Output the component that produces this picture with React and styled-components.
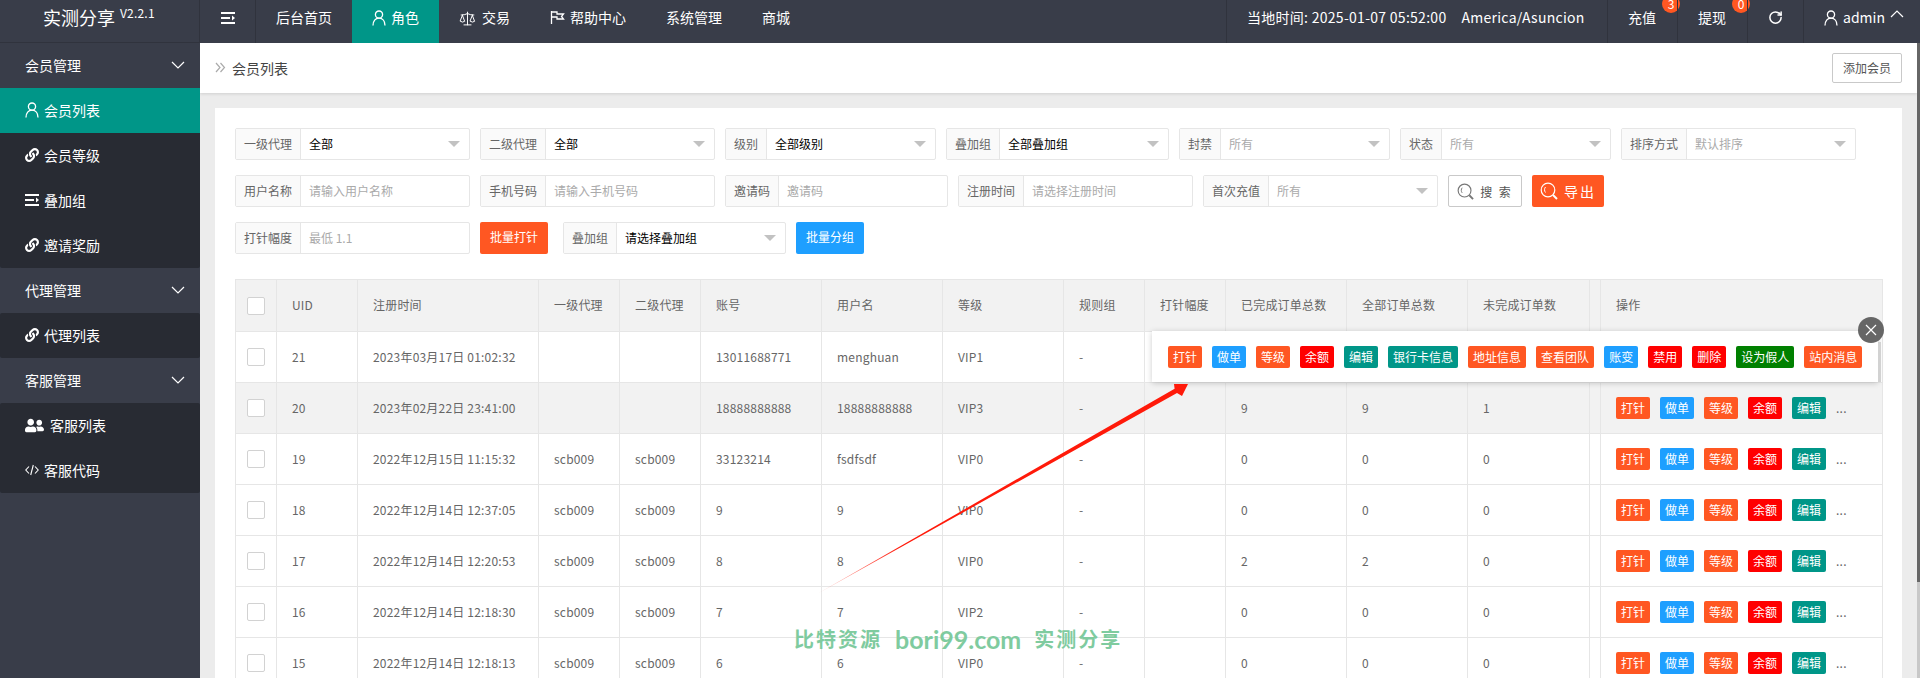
import React from "react";
import styled, { createGlobalStyle } from "styled-components";
import { Scale, RotateCw } from "lucide-react";
import { FaLink, FaUserFriends } from "react-icons/fa";

const GlobalStyle = createGlobalStyle`
  html, body {
    margin: 0;
    height: 100%;
    overflow: hidden;
    background: #ececec;
  }
  * { box-sizing: border-box; }
  body {
    font-family: "Noto Sans CJK SC", "Open Sans", sans-serif;
    font-size: 12px;
    color: #666;
  }
`;

const Page = styled.div`
  position: relative;
  width: 1920px;
  height: 678px;
  overflow: hidden;
  display: grid;
  grid-template-columns: 200px 1fr;
  grid-template-rows: 43px 1fr;
`;

/* top bar */
const Logo = styled.div`
  background: #393d49;
  border-bottom: 1px solid #30333d;
  border-right: 1px solid #30333d;
  color: #fff;
  font-size: 18px;
  line-height: 34px;
  padding-left: 43px;
  white-space: nowrap;
  sup {
    font-size: 12px;
    line-height: 12px;
    margin-left: 5px;
    letter-spacing: 0.2px;
    vertical-align: 7px;
  }
`;
const TopBar = styled.div`
  background: #393d49;
  color: #fff;
  display: flex;
  font-size: 14px;
  line-height: 34px;
`;
const Burger = styled.div`
  width: 56px;
  border-right: 1px solid #30333d;
  display: flex;
  align-items: center;
  justify-content: center;
  padding-bottom: 7px;
`;
const NavItem = styled.div`
  display: flex;
  gap: ${(p) => p.$gap || 5}px;
  align-items: flex-start;
  padding: 0 20px;
  white-space: nowrap;
  background: ${(p) => (p.$active ? "#009688" : "transparent")};
  svg { flex: none; margin-top: 10px; }
`;
const Spacer = styled.div`
  flex: 1;
`;
const RightCell = styled.div`
  position: relative;
  width: ${(p) => p.$w}px;
  border-left: 1px solid #30333d;
  display: flex;
  gap: ${(p) => p.$gap || 0}px;
  justify-content: ${(p) => (p.$center ? "center" : "flex-start")};
  padding-left: ${(p) => (p.$center ? 0 : 20)}px;
  white-space: nowrap;
  svg { flex: none; margin-top: 10px; }
`;
const TimeText = styled.span`
  letter-spacing: 0.28px;
`;
const Badge = styled.span`
  position: absolute;
  left: 54px;
  top: -5px;
  width: 18px;
  height: 18px;
  border-radius: 50%;
  background: #ff5722;
  font-size: 12px;
  line-height: 18px;
  text-align: center;
`;

/* side menu */
const Side = styled.div`
  background: #393d49;
  color: #fff;
  font-size: 14px;
`;
const SideHead = styled.div`
  height: 45px;
  padding: 0 15px 2px 25px;
  display: flex;
  align-items: center;
  justify-content: space-between;
`;
const SideGroup = styled.div`
  background: #282b33;
  border-radius: 2px;
`;
const SideItem = styled.div`
  height: 45px;
  padding: 0 0 1px 25px;
  display: flex;
  align-items: center;
  gap: ${(p) => p.$gap || 5}px;
  background: ${(p) => (p.$active ? "#009688" : "transparent")};
  svg { flex: none; }
`;

/* main area */
const Main = styled.div`
  background: #ececec;
  overflow: hidden;
  display: flex;
`;
const Content = styled.div`
  flex: 1;
  min-width: 0;
`;
const ScrollRail = styled.div`
  flex: none;
  width: 3px;
  background: #c8c8c8;
`;
const ScrollThumb = styled.div`
  height: 539px;
  background: #666;
`;
const Crumbs = styled.div`
  height: 50px;
  background: #fff;
  box-shadow: 0 1px 3px rgba(0, 0, 0, 0.12);
  padding: 0 15px;
  display: flex;
  align-items: center;
  justify-content: space-between;
`;
const CrumbText = styled.div`
  display: flex;
  align-items: center;
  gap: 6px;
  font-size: 14px;
  color: #444;
  padding-bottom: 1px;
`;
const AddButton = styled.div`
  width: 70px;
  height: 30px;
  border: 1px solid #c9c9c9;
  border-radius: 2px;
  color: #555;
  line-height: 28px;
  text-align: center;
`;
const Card = styled.div`
  margin: 15px 0 0 15px;
  width: 1687px;
  height: 683px;
  background: #fff;
  padding: 20px;
`;
const FormRow = styled.div`
  display: flex;
  gap: 10px;
  margin-bottom: 15px;
`;
const Field = styled.div`
  position: relative;
  width: ${(p) => p.$w || 235}px;
  height: 32px;
  border: 1px solid #e6e6e6;
  border-radius: 2px;
  display: flex;
  line-height: 30px;
  background: #fff;
`;
const FieldLabel = styled.div`
  padding: 0 8px;
  background: #fafafa;
  border-right: 1px solid #e6e6e6;
  color: #666;
  white-space: nowrap;
`;
const FieldValue = styled.div`
  padding-left: 8px;
  white-space: nowrap;
  color: ${(p) => (p.$strong ? "#000" : "#aaa")};
`;
const Caret = styled.i`
  position: absolute;
  right: 9px;
  top: 12px;
  border: 6px solid transparent;
  border-top-color: #c2c2c2;
  border-bottom: 0;
`;
const ActionButton = styled.div`
  width: 68px;
  height: 32px;
  margin-right: ${(p) => p.$mr || 0}px;
  border-radius: 2px;
  background: ${(p) => p.$bg};
  color: #fff;
  line-height: 30px;
  text-align: center;
  white-space: nowrap;
`;
const SearchButton = styled.div`
  width: ${(p) => p.$w}px;
  height: 32px;
  border-radius: 2px;
  background: ${(p) => p.$bg || "#fff"};
  border: ${(p) => (p.$bg ? "0" : "1px solid #c9c9c9")};
  color: ${(p) => (p.$bg ? "#fff" : "#555")};
  display: flex;
  align-items: center;
  justify-content: center;
  gap: 6px;
  letter-spacing: 2px;
  font-size: ${(p) => (p.$bg ? 14 : 12)}px;
`;

/* table */
const Table = styled.table`
  table-layout: fixed;
  width: 1647px;
  margin-top: 25px;
  border-collapse: collapse;
  color: #666;
`;
const HeadRow = styled.tr`
  height: 52px;
  background: #f2f2f2;
`;
const Row = styled.tr`
  height: 51px;
  background: ${(p) => (p.$hover ? "#f2f2f2" : "#fff")};
`;
const Cell = styled.td`
  border: 1px solid #e6e6e6;
  padding: 0 0 2px 15px;
  font-weight: 400;
  letter-spacing: 0.2px;
  text-align: left;
  white-space: nowrap;
  overflow: hidden;
`;
const FixedCell = styled(Cell)`
  position: relative;
  overflow: visible;
  background: inherit;
  box-shadow: ${(p) => (p.$left ? "3px 0 5px -2px" : "-3px 0 5px -2px")} rgba(0, 0, 0, 0.1);
  z-index: 1;
`;
const CheckCell = styled(Cell)`
  padding: 0 0 0 11px;
`;
const Check = styled.div`
  width: 18px;
  height: 18px;
  border: 1px solid #d2d2d2;
  border-radius: 2px;
  background: #fff;
`;
const Ops = styled.div`
  display: flex;
  align-items: center;
  gap: 10px;
  margin-top: 2px;
`;
const OpButton = styled.div`
  height: 22px;
  padding: 0 5px;
  border-radius: 2px;
  background: ${(p) => p.$bg};
  color: #fff;
  font-size: 12px;
  letter-spacing: 0;
  line-height: 22px;
  white-space: nowrap;
`;
const More = styled.span`
  color: #666;
  line-height: 22px;
`;

/* overlays */
const Popup = styled.div`
  position: absolute;
  left: 1152px;
  top: 331px;
  width: 726px;
  height: 51px;
  padding-left: 16px;
  background: #fff;
  box-shadow: 0 1px 6px rgba(0, 0, 0, 0.2);
  display: flex;
  align-items: center;
  gap: 10px;
  z-index: 3;
  &::after {
    content: "";
    position: absolute;
    right: -3px;
    top: 11px;
    bottom: 0;
    width: 3px;
    background: #d2d2d2;
  }
`;
const Close = styled.div`
  position: absolute;
  right: -6px;
  top: -14px;
  width: 26px;
  height: 26px;
  border-radius: 50%;
  background: #666;
  display: flex;
  align-items: center;
  justify-content: center;
  z-index: 4;
`;
const ArrowLayer = styled.svg`
  position: absolute;
  left: 0;
  top: 0;
  pointer-events: none;
  z-index: 5;
`;
const Watermark = styled.div`
  position: absolute;
  left: 794px;
  top: 624px;
  display: flex;
  gap: 13px;
  color: #7fcb9f;
  font-size: 20px;
  font-weight: 700;
  line-height: 30px;
  white-space: nowrap;
  z-index: 5;
`;
const MarkCjk = styled.span`
  letter-spacing: 2px;
`;
const MarkLatin = styled.span`
  font-family: "Lato", sans-serif;
  font-size: 25px;
`;

/* drawn icons */
const UserIcon = ({ size = 14 }) => (
  <svg width={size} height={size + 2} viewBox="0 0 14 16" fill="none" stroke="#fff" strokeWidth="1.3">
    <circle cx="7" cy="4.6" r="3.6" />
    <path d="M1 15.5c0-4.4 2.4-7.3 6-7.3s6 2.900 6 7.300" />
  </svg>
);
const MenuIcon = () => (
  <svg width="14" height="12" viewBox="0 0 14 12" fill="#fff">
    <rect x="0" y="0" width="14" height="2" />
    <rect x="0" y="5" width="9" height="2" />
    <path d="M11 3.500 14 6l-3 2.500z" />
    <rect x="0" y="10" width="14" height="2" />
  </svg>
);
const FlagIcon = () => (
  <svg width="15" height="15" viewBox="0 0 15 15" fill="none" stroke="#fff" strokeWidth="1.3">
    <path d="M1.500 1v13" />
    <path d="M1.500 2h5.500v2h6.500l-2 2.500 2 2.500H7V7H1.500" />
  </svg>
);
const CodeIcon = () => (
  <svg width="14" height="12" viewBox="0 0 14 12" fill="none" stroke="#fff" strokeWidth="1.1">
    <polyline points="4,2.500 0.800,6 4,9.500" />
    <polyline points="10,2.500 13.200,6 10,9.500" />
    <path d="M8.300 1 5.700 11" />
  </svg>
);
const Chevron = ({ up }) => (
  <svg width="14" height="8" viewBox="0 0 14 8" fill="none" stroke="#fff" strokeWidth="1.2">
    <polyline points={up ? "1,7 7,1 13,7" : "1,1 7,7 13,1"} />
  </svg>
);
const DoubleRight = () => (
  <svg width="11" height="11" viewBox="0 0 11 11" fill="none" stroke="#aaa" strokeWidth="1.200">
    <polyline points="1,1 5,5.500 1,10" />
    <polyline points="5.500,1 9.500,5.500 5.500,10" />
  </svg>
);
const SearchIcon = ({ color, size }) => (
  <svg width={size} height={size} viewBox="0 0 18 18" fill="none" stroke={color}>
    <circle cx="8" cy="8" r="6.800" strokeWidth="1.200" />
    <path d="M5.500 5c-1.300 1.500-1.300 4 0 5.500" strokeWidth="1" />
    <path d="M13 13l4 4" strokeWidth="2" />
  </svg>
);

const ORANGE = "#ff5722";
const BLUE = "#1e9fff";
const RED = "#ff0000";
const TEAL = "#009688";
const GREEN = "#008000";

const mainOps = [
  ["打针", ORANGE],
  ["做单", BLUE],
  ["等级", ORANGE],
  ["余额", RED],
  ["编辑", TEAL],
];
const popupOps = [
  ...mainOps,
  ["银行卡信息", TEAL],
  ["地址信息", ORANGE],
  ["查看团队", ORANGE],
  ["账变", BLUE],
  ["禁用", RED],
  ["删除", RED],
  ["设为假人", GREEN],
  ["站内消息", ORANGE],
];

const widths = [41, 81, 181, 81, 81, 121, 121, 121, 81, 81, 121, 121, 122, 11, 282];
const heads = ["一级代理", "二级代理", "账号", "用户名", "等级", "规则组", "打针幅度", "已完成订单总数", "全部订单总数", "未完成订单数"];
const rows = [
  ["21", "2023年03月17日 01:02:32", "", "", "13011688771", "menghuan", "VIP1", "-", "", "", "", ""],
  ["20", "2023年02月22日 23:41:00", "", "", "18888888888", "18888888888", "VIP3", "-", "", "9", "9", "1"],
  ["19", "2022年12月15日 11:15:32", "scb009", "scb009", "33123214", "fsdfsdf", "VIP0", "-", "", "0", "0", "0"],
  ["18", "2022年12月14日 12:37:05", "scb009", "scb009", "9", "9", "VIP0", "-", "", "0", "0", "0"],
  ["17", "2022年12月14日 12:20:53", "scb009", "scb009", "8", "8", "VIP0", "-", "", "2", "2", "0"],
  ["16", "2022年12月14日 12:18:30", "scb009", "scb009", "7", "7", "VIP2", "-", "", "0", "0", "0"],
  ["15", "2022年12月14日 12:18:13", "scb009", "scb009", "6", "6", "VIP0", "-", "", "0", "0", "0"],
];

function SelectField({ label, value, strong, w }) {
  return (
    <Field $w={w}>
      <FieldLabel>{label}</FieldLabel>
      <FieldValue $strong={strong}>{value}</FieldValue>
      <Caret />
    </Field>
  );
}

function InputField({ label, value, w }) {
  return (
    <Field $w={w}>
      <FieldLabel>{label}</FieldLabel>
      <FieldValue>{value}</FieldValue>
    </Field>
  );
}

function SideMenu() {
  const link = <FaLink size={14} color="#fff" />;
  return (
    <Side>
      <SideHead>会员管理<Chevron /></SideHead>
      <SideGroup>
        <SideItem $active><UserIcon />会员列表</SideItem>
        <SideItem>{link}会员等级</SideItem>
        <SideItem><MenuIcon />叠加组</SideItem>
        <SideItem>{link}邀请奖励</SideItem>
      </SideGroup>
      <SideHead>代理管理<Chevron /></SideHead>
      <SideGroup>
        <SideItem>{link}代理列表</SideItem>
      </SideGroup>
      <SideHead>客服管理<Chevron /></SideHead>
      <SideGroup>
        <SideItem $gap={6}><FaUserFriends size={19} color="#fff" />客服列表</SideItem>
        <SideItem><CodeIcon />客服代码</SideItem>
      </SideGroup>
    </Side>
  );
}

export default function App() {
  return (
    <Page>
      <GlobalStyle />
      <Logo>实测分享<sup>V2.2.1</sup></Logo>
      <TopBar>
        <Burger><MenuIcon /></Burger>
        <NavItem>后台首页</NavItem>
        <NavItem $active><UserIcon />角色</NavItem>
        <NavItem $gap={6}><Scale size={17} color="#fff" strokeWidth={1.4} />交易</NavItem>
        <NavItem><FlagIcon />帮助中心</NavItem>
        <NavItem>系统管理</NavItem>
        <NavItem>商城</NavItem>
        <Spacer />
        <RightCell $w={381} $gap={15}>
          <TimeText>当地时间: 2025-01-07 05:52:00</TimeText>
          <TimeText>America/Asuncion</TimeText>
        </RightCell>
        <RightCell $w={70}>充值<Badge>3</Badge></RightCell>
        <RightCell $w={70}>提现<Badge>0</Badge></RightCell>
        <RightCell $w={56} $center><RotateCw size={15} color="#fff" strokeWidth={2.4} /></RightCell>
        <RightCell $w={117} $gap={5}>
          <UserIcon />admin
          <Chevron up />
        </RightCell>
      </TopBar>
      <SideMenu />
      <Main>
        <Content>
          <Crumbs>
            <CrumbText><DoubleRight />会员列表</CrumbText>
            <AddButton>添加会员</AddButton>
          </Crumbs>
          <Card>
            <FormRow>
              <SelectField label="一级代理" value="全部" strong />
              <SelectField label="二级代理" value="全部" strong />
              <SelectField label="级别" value="全部级别" strong w={211} />
              <SelectField label="叠加组" value="全部叠加组" strong w={223} />
              <SelectField label="封禁" value="所有" w={211} />
              <SelectField label="状态" value="所有" w={211} />
              <SelectField label="排序方式" value="默认排序" />
            </FormRow>
            <FormRow>
              <InputField label="用户名称" value="请输入用户名称" />
              <InputField label="手机号码" value="请输入手机号码" />
              <InputField label="邀请码" value="邀请码" w={223} />
              <InputField label="注册时间" value="请选择注册时间" />
              <SelectField label="首次充值" value="所有" />
              <SearchButton $w={74}><SearchIcon color="#777" size={17} />搜 索</SearchButton>
              <SearchButton $w={72} $bg={ORANGE}><SearchIcon color="#fff" size={18} />导出</SearchButton>
            </FormRow>
            <FormRow>
              <InputField label="打针幅度" value="最低 1.1" />
              <ActionButton $bg={ORANGE} $mr={5}>批量打针</ActionButton>
              <SelectField label="叠加组" value="请选择叠加组" strong w={223} />
              <ActionButton $bg={BLUE}>批量分组</ActionButton>
            </FormRow>
            <Table>
              <colgroup>
                {widths.map((w, i) => <col key={i} width={w} />)}
              </colgroup>
              <thead>
                <HeadRow>
                  <CheckCell as="th"><Check /></CheckCell>
                  <FixedCell as="th" $left>UID</FixedCell>
                  <Cell as="th">注册时间</Cell>
                  {heads.map((h) => <Cell as="th" key={h}>{h}</Cell>)}
                  <Cell as="th" />
                  <FixedCell as="th">操作</FixedCell>
                </HeadRow>
              </thead>
              <tbody>
                {rows.map((r, i) => (
                  <Row key={r[0]} $hover={i === 1}>
                    <CheckCell><Check /></CheckCell>
                    <FixedCell $left>{r[0]}</FixedCell>
                    {r.slice(1).map((c, j) => <Cell key={j}>{c}</Cell>)}
                    <Cell />
                    <FixedCell>
                      {i > 0 && (
                        <Ops>
                          {mainOps.map(([t, bg]) => <OpButton key={t} $bg={bg}>{t}</OpButton>)}
                          <More>...</More>
                        </Ops>
                      )}
                    </FixedCell>
                  </Row>
                ))}
              </tbody>
            </Table>
          </Card>
        </Content>
        <ScrollRail><ScrollThumb /></ScrollRail>
      </Main>
      <Popup>
        {popupOps.map(([t, bg]) => <OpButton key={t} $bg={bg}>{t}</OpButton>)}
        <Close>
          <svg width="12" height="12" viewBox="0 0 12 12" stroke="#fff" strokeWidth="1.2">
            <path d="M1 1l10 10M11 1L1 11" />
          </svg>
        </Close>
      </Popup>
      <ArrowLayer width="1920" height="678" viewBox="0 0 1920 678">
        <defs>
          <linearGradient id="tail" gradientUnits="userSpaceOnUse" x1="817" y1="594" x2="900" y2="546">
            <stop offset="0" stopColor="#ff1a0a" stopOpacity="0.25" />
            <stop offset="1" stopColor="#ff1a0a" />
          </linearGradient>
        </defs>
        <polygon
          points="817,594 1174.600,388.700 1174,384 1188,384 1182,396 1177,393.100"
          fill="url(#tail)"
        />
      </ArrowLayer>
      <Watermark>
        <MarkCjk>比特资源</MarkCjk>
        <MarkLatin>bori99.com</MarkLatin>
        <MarkCjk>实测分享</MarkCjk>
      </Watermark>
    </Page>
  );
}
